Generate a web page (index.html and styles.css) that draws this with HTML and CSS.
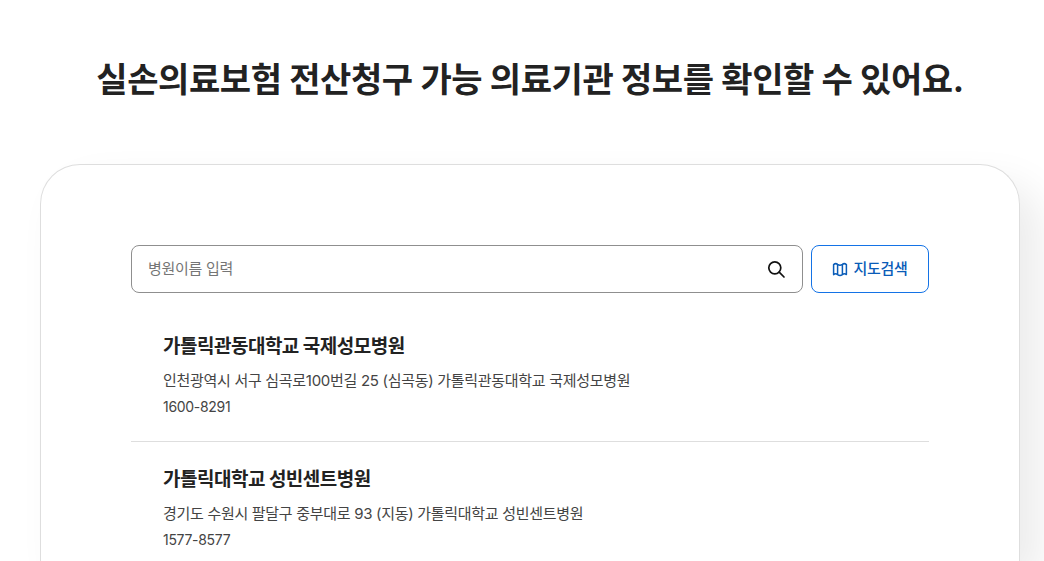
FILE: index.html
```html
<!DOCTYPE html>
<html lang="ko">
<head>
  <meta charset="UTF-8" />
  <meta name="viewport" content="width=device-width, initial-scale=1.0">
  <title>의료기관 정보 확인</title>
  <link rel="stylesheet" href="styles.css">
</head>
<body>
  <div class="wrap">
    <h1 class="page-title">실손의료보험 전산청구 가능 의료기관 정보를 확인할 수 있어요.</h1>

    <section class="card">
      <div class="search-row">
        <div class="search-box">
          <input type="text" class="search-input" placeholder="병원이름 입력" />
          <svg class="search-icon" width="20" height="20" viewBox="0 0 20 20" fill="none" stroke="#111" stroke-width="1.7">
            <circle cx="8.8" cy="8.8" r="6" />
            <path d="M13.2 13.2 L18 18" stroke-linecap="round" />
          </svg>
        </div>
        <button class="map-btn">
          <svg width="16" height="16" viewBox="0 0 16 16" fill="none" stroke="#0a5cb8" stroke-width="1.5" stroke-linejoin="round">
            <path d="M1.6 3.6 C3 2.4 4.4 2.4 5.6 3.4 C6.8 4.2 9.2 4.2 10.4 3.4 C11.6 2.4 13 2.4 14.4 3.6 V13.6 C13 12.6 11.6 12.6 10.4 13.6 C9.2 14.4 6.8 14.4 5.6 13.6 C4.4 12.6 3 12.6 1.6 13.6 Z" />
            <path d="M5.6 3.4 V13.6 M10.4 3.4 V13.6" />
          </svg>
          <span class="map-btn-label">지도검색</span>
        </button>
      </div>

      <ul class="result-list">
        <li class="result-item">
          <h2 class="result-name">가톨릭관동대학교 국제성모병원</h2>
          <p class="result-addr">인천광역시 서구 심곡로100번길 25 (심곡동) 가톨릭관동대학교 국제성모병원</p>
          <p class="result-tel">1600-8291</p>
        </li>
        <li class="result-item">
          <h2 class="result-name">가톨릭대학교 성빈센트병원</h2>
          <p class="result-addr">경기도 수원시 팔달구 중부대로 93 (지동) 가톨릭대학교 성빈센트병원</p>
          <p class="result-tel">1577-8577</p>
        </li>
      </ul>
    </section>
  </div>
</body>
</html>
```

FILE: styles.css
```css
html, body {
  height: 561px;
  overflow: hidden;
}
body {
  margin: 0;
  font-family: Inter, 'Noto Sans CJK KR', sans-serif;
  background: #fff;
  color: #1a1a1a;
}
.wrap {
  width: 980px;
  margin-left: 40px;
}
.page-title {
  margin: 0;
  padding-top: 56px;
  height: 164px;
  box-sizing: border-box;
  line-height: 48px;
  font-size: 34px;
  font-weight: 700;
  letter-spacing: -0.4px;
  text-align: center;
  color: #222;
}
/* la tarjeta sigue por debajo de la ventana, se corta sin borde inferior */
.card {
  height: 397px;
  box-sizing: border-box;
  padding: 80px 90px 0;
  border: 1px solid #dedede;
  border-bottom: none;
  border-radius: 40px 40px 0 0;
  background: #fff;
  box-shadow: 20px 20px 40px rgba(0, 0, 0, 0.08);
}
.search-row {
  display: flex;
  gap: 8px;
}
.search-box {
  flex: 1;
  display: flex;
  align-items: center;
  height: 48px;
  box-sizing: border-box;
  padding: 0 16px;
  border: 1px solid #8f8f8f;
  border-radius: 8px;
}
.search-input {
  flex: 1;
  border: none;
  outline: none;
  padding: 0 0 2px;
  font-family: inherit;
  font-size: 15px;
  letter-spacing: -0.3px;
  color: #333;
}
.search-input::placeholder {
  color: #757575;
  opacity: 1;
}
.map-btn {
  width: 118px;
  height: 48px;
  display: flex;
  align-items: center;
  justify-content: center;
  gap: 5px;
  padding: 0;
  border: 1px solid #1473e6;
  border-radius: 8px;
  background: #fff;
  color: #0a5cb8;
  font-family: inherit;
  font-size: 15px;
  font-weight: 500;
  letter-spacing: -0.3px;
}
.map-btn-label {
  margin-bottom: 3px;
}
.result-list {
  margin: 16px 0 0;
  padding: 0;
  list-style: none;
}
.result-item {
  padding: 25px 32px 24px;
  border-bottom: 1px solid #dedede;
}
.result-item:last-child {
  border-bottom: none;
  padding-bottom: 0;
}
.result-name {
  margin: 0 0 11px;
  font-size: 19px;
  line-height: 26px;
  font-weight: 700;
  letter-spacing: -0.5px;
  color: #222;
}
.result-addr,
.result-tel {
  margin: 0;
  line-height: 20px;
  color: #444;
}
.result-addr {
  margin-bottom: 6px;
  font-size: 15px;
  letter-spacing: -0.3px;
}
.result-tel {
  font-size: 14px;
  letter-spacing: -0.3px;
}
```
